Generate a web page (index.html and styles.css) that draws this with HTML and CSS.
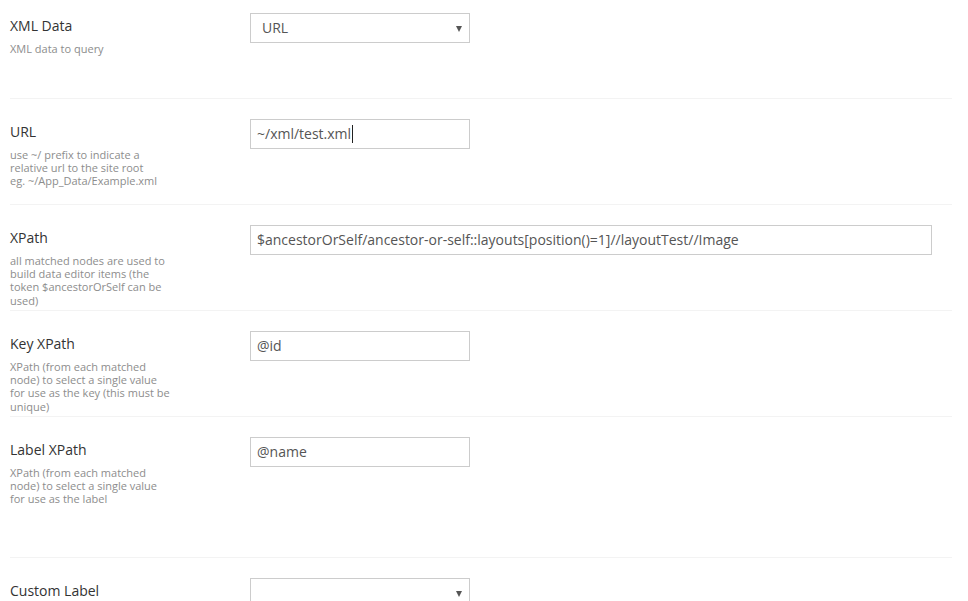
FILE: index.html
```html
<!DOCTYPE html>
<html>
<head>
<meta charset="utf-8">
<link rel="stylesheet" href="styles.css">
</head>
<body>
<div class="form">
  <div class="row row-first">
    <div class="label-col">
      <div class="label">XML Data</div>
      <div class="desc">XML data to query</div>
    </div>
    <div class="control">
      <div class="field select">URL<span class="arrow"></span></div>
    </div>
  </div>
  <div class="row">
    <div class="label-col">
      <div class="label">URL</div>
      <div class="desc">use ~/ prefix to indicate a relative url to the site root<br>eg. ~/App_Data/Example.xml</div>
    </div>
    <div class="control">
      <div class="field">~/xml/test.xml<span class="caret"></span></div>
    </div>
  </div>
  <div class="row">
    <div class="label-col">
      <div class="label">XPath</div>
      <div class="desc">all matched nodes are used to build data editor items (the token $ancestorOrSelf can be used)</div>
    </div>
    <div class="control">
      <div class="field field-wide">$ancestorOrSelf/ancestor-or-self::layouts[position()=1]//layoutTest//Image</div>
    </div>
  </div>
  <div class="row">
    <div class="label-col">
      <div class="label">Key XPath</div>
      <div class="desc">XPath (from each matched node) to select a single value for use as the key (this must be unique)</div>
    </div>
    <div class="control">
      <div class="field">@id</div>
    </div>
  </div>
  <div class="row row-tall">
    <div class="label-col">
      <div class="label">Label XPath</div>
      <div class="desc">XPath (from each matched node) to select a single value for use as the label</div>
    </div>
    <div class="control">
      <div class="field">@name</div>
    </div>
  </div>
  <div class="row">
    <div class="label-col">
      <div class="label">Custom Label</div>
    </div>
    <div class="control">
      <div class="field select"><span class="arrow"></span></div>
    </div>
  </div>
</div>
</body>
</html>
```

FILE: styles.css
```css
html, body {
  margin: 0;
  padding: 0;
  background: #ffffff;
  overflow: hidden;
}
body {
  font-family: "Open Sans", "DejaVu Sans", sans-serif;
  color: #333333;
}
.form {
  margin-left: 10px;
  width: 942px;
}
.row {
  display: flex;
  box-sizing: border-box;
  height: 106px;
  padding-top: 20px;
  border-bottom: 1px solid #f3f3f3;
}
.row-first {
  height: 99px;
  padding-top: 13px;
}
.row-tall {
  height: 141px;
}
.label-col {
  width: 160px;
  margin-right: 80px;
  padding-top: 3px;
}
.label {
  font-size: 14px;
  line-height: 20px;
  color: #333333;
}
.desc {
  margin-top: 6px;
  font-size: 11px;
  line-height: 13.2px;
  color: #8d8d8d;
}
.control {
  flex: 1;
}
.field {
  position: relative;
  box-sizing: border-box;
  width: 220px;
  height: 30px;
  border: 1px solid #cccccc;
  background: #ffffff;
  padding: 0 6px;
  font-size: 14px;
  line-height: 28px;
  color: #555555;
  white-space: nowrap;
}
.field-wide {
  width: 682px;
}
.select {
  padding-left: 11px;
}
.arrow {
  position: absolute;
  right: 7px;
  top: 12px;
  width: 0;
  height: 0;
  border-left: 3.5px solid transparent;
  border-right: 3.5px solid transparent;
  border-top: 6px solid #555555;
}
.caret {
  display: inline-block;
  width: 1px;
  height: 18px;
  background: #222222;
  vertical-align: -4px;
  margin-left: 1px;
}
```
